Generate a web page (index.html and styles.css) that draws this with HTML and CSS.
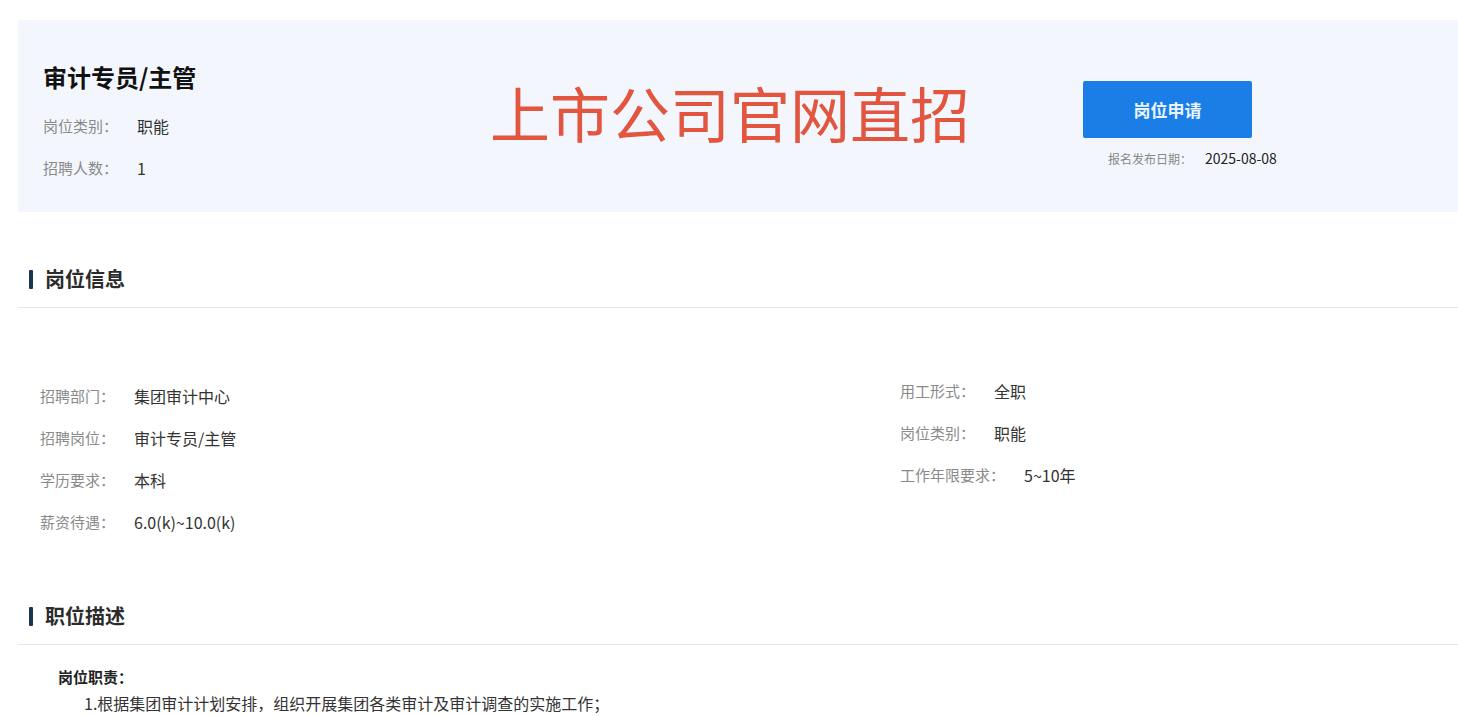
FILE: index.html
```html
<!DOCTYPE html>
<html lang="zh-CN">
<head>
  <meta charset="UTF-8" />
  <meta name="viewport" content="width=device-width, initial-scale=1.0"/>
  <title>审计专员/主管</title>
  <link rel="stylesheet" href="styles.css">
</head>
<body>
  <div class="page">
    <div class="job-head">
      <div class="head-left">
        <h1>审计专员/主管</h1>
        <div class="row"><span class="label">岗位类别：</span><span class="value">职能</span></div>
        <div class="row"><span class="label">招聘人数：</span><span class="value">1</span></div>
      </div>
      <div class="head-right">
        <button class="apply">岗位申请</button>
        <div class="pub-date"><span class="pub-label">报名发布日期：</span><span>2025-08-08</span></div>
      </div>
      <div class="stamp">上市公司官网直招</div>
    </div>

    <div class="section">
      <h2 class="section-title">岗位信息</h2>
      <div class="info-grid">
        <div class="info-col left">
          <div class="row"><span class="label">招聘部门：</span><span class="value">集团审计中心</span></div>
          <div class="row"><span class="label">招聘岗位：</span><span class="value">审计专员/主管</span></div>
          <div class="row"><span class="label">学历要求：</span><span class="value">本科</span></div>
          <div class="row"><span class="label">薪资待遇：</span><span class="value">6.0(k)~10.0(k)</span></div>
        </div>
        <div class="info-col right">
          <div class="row"><span class="label">用工形式：</span><span class="value">全职</span></div>
          <div class="row"><span class="label">岗位类别：</span><span class="value">职能</span></div>
          <div class="row"><span class="label">工作年限要求：</span><span class="value">5~10年</span></div>
        </div>
      </div>
    </div>

    <div class="section desc">
      <h2 class="section-title">职位描述</h2>
      <div class="desc-body">
        <p class="desc-head">岗位职责：</p>
        <p class="desc-line">1.根据集团审计计划安排，组织开展集团各类审计及审计调查的实施工作；</p>
      </div>
    </div>
  </div>
</body>
</html>
```

FILE: styles.css
```css
* {
  box-sizing: border-box;
}
body {
  margin: 0;
  background: #fff;
  font-family: "Noto Sans CJK SC", "Liberation Sans", sans-serif;
  color: #333;
  overflow: hidden;
}
.page {
  margin-left: 18px;
  margin-top: 20px;
  width: 1440px;
}
.job-head {
  position: relative;
  display: grid;
  grid-template-columns: 1065px 1fr;
  height: 192px;
  background: #f3f7fd;
}
.head-left {
  padding: 41px 0 0 25px;
}
.head-left h1 {
  margin: 0 0 12px;
  font-size: 24px;
  line-height: 32px;
  font-weight: bold;
  color: #111;
}
.row {
  display: flex;
  gap: 19px;
  height: 42px;
  line-height: 42px;
  white-space: nowrap;
}
.label {
  font-size: 15px;
  color: #8a8a8a;
}
.value {
  font-size: 16px;
  color: #333;
}
.head-right {
  padding-top: 61px;
}
.apply {
  display: block;
  width: 169px;
  height: 57px;
  border: 0;
  border-radius: 2px;
  background: #1a7ee6;
  color: #e8f5ff;
  font-family: inherit;
  font-size: 17px;
  font-weight: bold;
}
.pub-date {
  margin-top: 10px;
  padding-left: 25px;
  line-height: 20px;
  font-size: 14px;
  color: #222;
}
.pub-label {
  font-size: 12px;
  color: #888;
  margin-right: 13px;
}
.stamp {
  position: absolute;
  left: 472px;
  top: 62px;
  font-size: 60px;
  line-height: 1;
  color: #e2553f;
  white-space: nowrap;
}
.section {
  margin-top: 53px;
}
.section-title {
  margin: 0;
  padding: 0 0 14px 11px;
  display: flex;
  align-items: center;
  gap: 12px;
  height: 43px;
  line-height: 28px;
  font-size: 20px;
  font-weight: bold;
  color: #2b2b2b;
  border-bottom: 1px solid #e6e6e6;
}
.section-title::before {
  content: "";
  width: 4px;
  height: 19px;
  border-radius: 1px;
  background: #1a3553;
}
.info-grid {
  display: grid;
  grid-template-columns: 860px 1fr;
}
.info-col {
  padding-left: 22px;
}
.info-col.left {
  padding-top: 67px;
}
.info-col.right {
  padding-top: 62px;
}
.desc {
  margin-top: 59px;
}
.desc-body {
  padding: 19px 0 0 40px;
}
.desc-body p {
  margin: 0;
  line-height: 26px;
}
.desc-head {
  font-size: 15px;
  font-weight: bold;
  color: #222;
}
.desc-line {
  padding-left: 26px;
  font-size: 16px;
  color: #333;
}
```
